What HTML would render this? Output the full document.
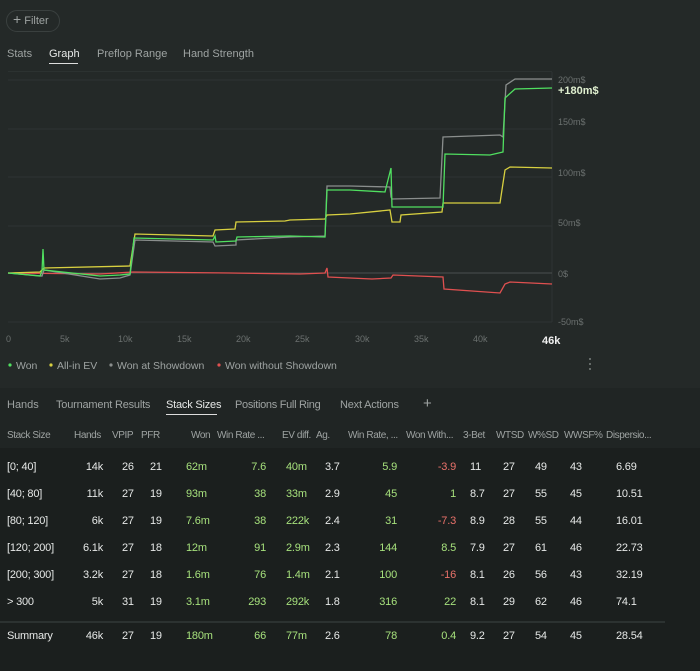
<!DOCTYPE html><html><head><meta charset="utf-8"><style>
body{margin:0;width:700px;height:671px;background:#242928;font-family:"Liberation Sans",sans-serif;color:#c8cccb;overflow:hidden;position:relative;font-size:11px}
.a{position:absolute;white-space:nowrap}
.t{font-size:11px;color:#9ea3a2}
.g{color:#a6e07c}.r{color:#e8716a}.w{color:#e6e8e7}
</style></head><body>
<div class="a" style="left:6px;top:10px;width:52px;height:20px;border:1px solid #3a403f;border-radius:11px;"></div>
<div class="a" style="left:13px;top:13px;font-size:11px;color:#9ea3a2"><span style="font-size:14px;line-height:12px">+</span> Filter</div>
<div class="a t" style="left:7px;top:48px">Stats</div>
<div class="a w" style="left:49px;top:48px;font-size:11px">Graph</div>
<div class="a" style="left:49px;top:63px;width:29px;height:1px;background:#ddd"></div>
<div class="a t" style="left:97px;top:48px">Preflop Range</div>
<div class="a t" style="left:183px;top:48px">Hand Strength</div>
<div class="a" style="left:8px;top:71px;width:544px;height:1px;background:#2c3231"></div>
<svg class="a" style="left:0;top:0" width="700" height="388">
<g stroke="#2e3433" stroke-width="1">
<line x1="8" y1="80" x2="552" y2="80"/><line x1="8" y1="129" x2="552" y2="129"/><line x1="8" y1="177" x2="552" y2="177"/><line x1="8" y1="226" x2="552" y2="226"/><line x1="8" y1="322" x2="552" y2="322"/><line x1="552" y1="72" x2="552" y2="322"/>
</g>
<line x1="8" y1="273" x2="552" y2="273" stroke="#4a504f"/>
<g fill="none" stroke-width="1.3">
<polyline stroke="#e05050" points="8,273 100,274 133,272 230,273 300,274 325,273 327,268 328,277 372,279 391,278 393,275 443,277 444,289 500,293 505,284 510,282 552,284"/>
<polyline stroke="#d8d040" points="8,273 40,272 44,268 130,266 135,234 213,236 215,230 235,229 236,222 285,221 290,220 325,219 327,215 350,214 390,210 392,222 400,222 401,215 442,212 443,203 500,203 505,170 510,167 552,168"/>
<polyline stroke="#8a8e8d" points="8,273 42,276 44,270 100,279 120,278 130,275 135,240 213,242 215,246 236,245 236,240 290,237 325,236 327,186 350,186 390,187 391,197 392,199 440,198 443,137 500,135 503,137 506,85 515,79 552,79"/>
<polyline stroke="#50e060" points="8,273 40,276 42,271 43,249 44,270 100,276 120,275 130,274 134,238 213,240 215,236 216,242 236,241 237,237 290,236 325,237 327,190 350,190 385,192 391,168 392,207 443,207 445,154 490,155 503,152 505,98 515,89 552,88"/>
</g>
<g font-family="Liberation Sans" font-size="9" fill="#6b706f">
<text x="558" y="83">200m$</text><text x="558" y="125">150m$</text><text x="558" y="176">100m$</text><text x="558" y="226">50m$</text><text x="558" y="277">0$</text><text x="558" y="325">-50m$</text>
<text x="6" y="342">0</text><text x="60" y="342">5k</text><text x="118" y="342">10k</text><text x="177" y="342">15k</text><text x="236" y="342">20k</text><text x="295" y="342">25k</text><text x="355" y="342">30k</text><text x="414" y="342">35k</text><text x="473" y="342">40k</text>
</g>
<text x="558" y="94" font-family="Liberation Sans" font-size="11" font-weight="bold" fill="#e0f0d0">+180m$</text>
<text x="542" y="344" font-family="Liberation Sans" font-size="11" font-weight="bold" fill="#f0f0f0">46k</text>
<g font-family="Liberation Sans" font-size="10.5" fill="#9ea3a2">
<circle cx="10" cy="365" r="1.6" fill="#50e060"/><text x="16" y="369">Won</text>
<circle cx="51" cy="365" r="1.6" fill="#d8d040"/><text x="57" y="369">All-in EV</text>
<circle cx="111" cy="365" r="1.6" fill="#8a8e8d"/><text x="117" y="369">Won at Showdown</text>
<circle cx="219" cy="365" r="1.6" fill="#e05050"/><text x="225" y="369">Won without Showdown</text>
</g>
<g fill="#7a7f7e"><circle cx="590" cy="359" r="1"/><circle cx="590" cy="364" r="1"/><circle cx="590" cy="369" r="1"/></g>
</svg>
<div class="a" style="left:0;top:388px;width:700px;height:60px;background:#202524"></div>
<div class="a" style="left:0;top:448px;width:700px;height:223px;background:#1b1f1e"></div>
<div class="a t" style="left:7px;top:399px">Hands</div>
<div class="a t" style="left:56px;top:399px;letter-spacing:-0.2px">Tournament Results</div>
<div class="a w" style="left:166px;top:399px;letter-spacing:-0.2px">Stack Sizes</div>
<div class="a" style="left:166px;top:414px;width:51px;height:1px;background:#ddd"></div>
<div class="a t" style="left:235px;top:399px;letter-spacing:-0.3px">Positions Full Ring</div>
<div class="a t" style="left:340px;top:399px;letter-spacing:-0.2px">Next Actions</div>
<div class="a t" style="left:423px;top:395px;font-size:15px">+</div>
<div id="hdr"></div>
<div class="a" style="left:0;top:621px;width:665px;height:2px;background:#2c3231"></div>
<script>
var hx=[["Stack Size",7],["Hands",74],["VPIP",112],["PFR",141],["Won",191],["Win Rate ...",217],["EV diff.",282],["Ag.",316],["Win Rate, ...",348],["Won With...",406],["3-Bet",463],["WTSD",496],["W%SD",528],["WWSF%",564],["Dispersio...",606]];
var h="";hx.forEach(function(c){h+='<div class="a t" style="left:'+c[1]+'px;top:430px;font-size:10px;letter-spacing:-0.4px">'+c[0]+'</div>';});
var cols=[["l",7],["r",103],["l",122],["l",150],["l",186],["r",266],["l",286],["l",325],["r",397],["r",456],["l",470],["l",503],["l",535],["l",570],["l",616]];
var rows=[["[0; 40]","14k","26","21","62m","7.6","40m","3.7","5.9","-3.9","11","27","49","43","6.69"],
["[40; 80]","11k","27","19","93m","38","33m","2.9","45","1","8.7","27","55","45","10.51"],
["[80; 120]","6k","27","19","7.6m","38","222k","2.4","31","-7.3","8.9","28","55","44","16.01"],
["[120; 200]","6.1k","27","18","12m","91","2.9m","2.3","144","8.5","7.9","27","61","46","22.73"],
["[200; 300]","3.2k","27","18","1.6m","76","1.4m","2.1","100","-16","8.1","26","56","43","32.19"],
["> 300","5k","31","19","3.1m","293","292k","1.8","316","22","8.1","29","62","46","74.1"],
["Summary","46k","27","19","180m","66","77m","2.6","78","0.4","9.2","27","54","45","28.54"]];
var ys=[461,488,515,542,569,596,630];
rows.forEach(function(r,i){r.forEach(function(v,j){var c=cols[j];var cl="w";
if(j==4||j==5||j==6||j==8)cl="g";if(j==9)cl=(v.charAt(0)=="-")?"r":"g";
var pos=c[0]=="l"?"left:"+c[1]+"px":"right:"+(700-c[1])+"px";
h+='<div class="a '+cl+'" style="'+pos+';top:'+ys[i]+'px;font-size:11px;letter-spacing:-0.2px">'+v+'</div>';});});
document.getElementById("hdr").innerHTML=h;
</script>
</body></html>
